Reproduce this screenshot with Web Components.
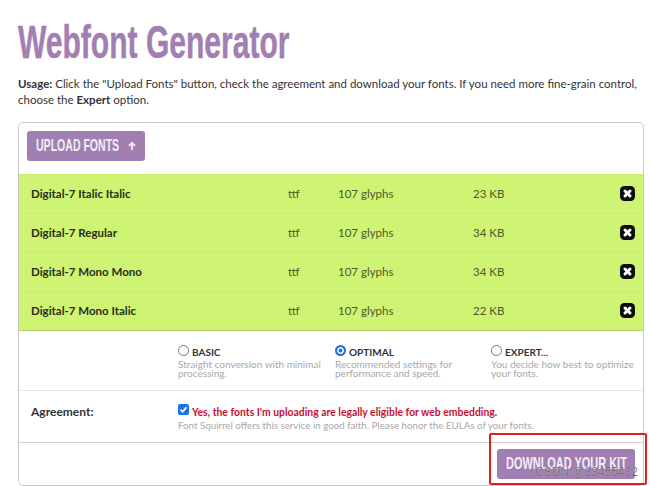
<!DOCTYPE html>
<html>
<head>
<meta charset="utf-8">
<title>Webfont Generator</title>
<style>
html, body { margin: 0; padding: 0; background: #fff; }
body { width: 650px; height: 486px; overflow: hidden; font-family: Lato, "Noto Sans", sans-serif; color: #333; }
</style>
</head>
<body>
<font-generator></font-generator>

<template id="font-row-tpl">
  <style>
    :host { display: grid; grid-template-columns: 257px 50px 135px 147px 14px; align-items: center; height: 39px; padding: 0 0 2px 12px; background: #cff372; font-size: 11.5px; color: #4d5a2c; border-top: 1px solid #c8ec6c; box-sizing: border-box; }
    .name { font-weight: 700; color: #26301a; }
    svg { display: block; }
  </style>
  <span class="name"><slot name="name"></slot></span>
  <span><slot name="type"></slot></span>
  <span><slot name="glyphs"></slot></span>
  <span><slot name="size"></slot></span>
  <svg width="15" height="15" viewBox="0 0 15 15"><rect width="15" height="15" rx="4.5" fill="#0c0c0c"/><path d="M5 5l5 5M10 5l-5 5" stroke="#fff" stroke-width="3" stroke-linecap="round"/></svg>
</template>

<template id="mode-option-tpl">
  <style>
    :host { display: block; font-size: 10px; line-height: 9px; color: #a8a8a8; padding-top: 2px; white-space: nowrap; }
    .head { display: flex; align-items: center; gap: 3px; height: 13px; margin-bottom: 1px; font-size: 10px; font-weight: 700; color: #333; }
    .radio { width: 11px; height: 11px; border-radius: 50%; border: 1px solid #777; box-sizing: border-box; background: #fff; position: relative; top: -2px; }
    :host([checked]) .radio { border: 2px solid #1a73e8; background: #1a73e8; box-shadow: inset 0 0 0 1.5px #fff; }
  </style>
  <div class="head"><span class="radio"></span><slot name="title"></slot></div>
  <slot></slot>
</template>

<template id="cta-button-tpl">
  <style>
    :host { display: flex; align-items: center; background: #a27fb2; color: #f4eef6; border-radius: 3px; box-sizing: border-box; }
    .t { display: block; flex: none; width: var(--w); font-family: "Liberation Sans", sans-serif; font-size: 17px; font-weight: 700; white-space: nowrap; transform: scaleX(var(--sx)); transform-origin: left center; }
  </style>
  <span class="t"><slot></slot></span>
  <slot name="icon"></slot>
</template>

<template id="font-generator-tpl">
  <style>
    :host { display: block; padding: 0 6px 0 18px; }
    h1 { margin: 0; padding-top: 15px; height: 61px; font-family: "Liberation Sans", sans-serif; font-size: 46px; line-height: 54px; font-weight: 700; color: #a27fb2; white-space: nowrap; -webkit-text-stroke: .5px #a27fb2; }
    h1 span { display: inline-block; transform: scaleX(.653); transform-origin: left center; }
    .usage { margin: 0; height: 46px; font-size: 11.5px; line-height: 16px; color: #333; white-space: nowrap; }
    .card { border: 1px solid #c8c8c8; border-radius: 5px; height: 364px; box-sizing: border-box; overflow: hidden; }
    .upload { height: 51px; padding: 8px 8px 0; box-sizing: border-box; }
    cta-button { width: 118px; height: 30px; }
    cta-button.up { --w: 83px; --sx: .62; padding-left: 9px; gap: 8px; }
    cta-button.up svg { display: block; }
    cta-button.dl { --w: 121px; --sx: .644; width: 138px; padding-left: 9px; }
    .rows { border-bottom: 1px solid #b4cc6a; }
    .modes { display: grid; grid-template-columns: 157px 156px 1fr; height: 60px; padding: 13px 0 0 159px; box-sizing: border-box; border-bottom: 1px solid #e8e8e8; }
    .agree { display: grid; grid-template-columns: 147px 1fr; height: 52px; padding: 13px 0 0 12px; box-sizing: border-box; border-bottom: 1px solid #cfcfcf; }
    .agree b { font-size: 12px; color: #333; }
    .yes { display: flex; align-items: center; gap: 3px; font-size: 10.4px; font-weight: 700; color: #c8102e; height: 13px; padding-top: 1px; white-space: nowrap; }
    .box { width: 11px; height: 11px; flex: none; position: relative; top: -2px; }
    .fine { font-size: 9.75px; color: #a8a8a8; margin-top: 1px; white-space: nowrap; }
    .foot { display: flex; justify-content: flex-end; padding: 6px 8px 0 0; }
    .mark { position: absolute; left: 489px; top: 433px; width: 158px; height: 52px; border: 2px solid #e0201c; border-radius: 2px; box-sizing: border-box; }
    .wm { position: absolute; left: 535px; top: 465px; font-family: "Liberation Sans", sans-serif; font-size: 12px; color: rgba(85,85,85,.75); text-shadow: 0 0 1px rgba(255,255,255,.6); white-space: nowrap; }
  </style>
  <h1><span>Webfont Generator</span></h1>
  <p class="usage"><b>Usage:</b> Click the "Upload Fonts" button, check the agreement and download your fonts. If you need more fine-grain control,<br>choose the <b>Expert</b> option.</p>
  <div class="card">
    <div class="upload"><cta-button class="up">UPLOAD FONTS<svg slot="icon" width="10" height="10" viewBox="0 0 10 10"><path d="M5 9V2M2 4.8L5 1.8 8 4.8" fill="none" stroke="#f4eef6" stroke-width="1.8"/></svg></cta-button></div>
    <div class="rows">
      <font-row><span slot="name">Digital-7 Italic Italic</span><span slot="type">ttf</span><span slot="glyphs">107 glyphs</span><span slot="size">23 KB</span></font-row>
      <font-row><span slot="name">Digital-7 Regular</span><span slot="type">ttf</span><span slot="glyphs">107 glyphs</span><span slot="size">34 KB</span></font-row>
      <font-row><span slot="name">Digital-7 Mono Mono</span><span slot="type">ttf</span><span slot="glyphs">107 glyphs</span><span slot="size">34 KB</span></font-row>
      <font-row><span slot="name">Digital-7 Mono Italic</span><span slot="type">ttf</span><span slot="glyphs">107 glyphs</span><span slot="size">22 KB</span></font-row>
    </div>
    <div class="modes">
      <mode-option><span slot="title">BASIC</span>Straight conversion with minimal<br>processing.</mode-option>
      <mode-option checked><span slot="title">OPTIMAL</span>Recommended settings for<br>performance and speed.</mode-option>
      <mode-option><span slot="title">EXPERT...</span>You decide how best to optimize<br>your fonts.</mode-option>
    </div>
    <div class="agree">
      <b>Agreement:</b>
      <div>
        <div class="yes"><svg class="box" viewBox="0 0 11 11"><rect width="11" height="11" rx="2" fill="#1a73e8"/><path d="M2.5 5.6l2.2 2.2 3.8-4.5" fill="none" stroke="#fff" stroke-width="1.7"/></svg>Yes, the fonts I'm uploading are legally eligible for web embedding.</div>
        <div class="fine">Font Squirrel offers this service in good faith. Please honor the EULAs of your fonts.</div>
      </div>
    </div>
    <div class="foot"><cta-button class="dl">DOWNLOAD YOUR KIT</cta-button></div>
  </div>
  <div class="mark"></div>
  <div class="wm">CSDN @33455432</div>
</template>

<script>
function define(tag, tplId) {
  customElements.define(tag, class extends HTMLElement {
    constructor() {
      super();
      this.attachShadow({ mode: 'open' });
      this.shadowRoot.appendChild(document.getElementById(tplId).content.cloneNode(true));
    }
  });
}
define('font-row', 'font-row-tpl');
define('mode-option', 'mode-option-tpl');
define('cta-button', 'cta-button-tpl');
define('font-generator', 'font-generator-tpl');
</script>
</body>
</html>
